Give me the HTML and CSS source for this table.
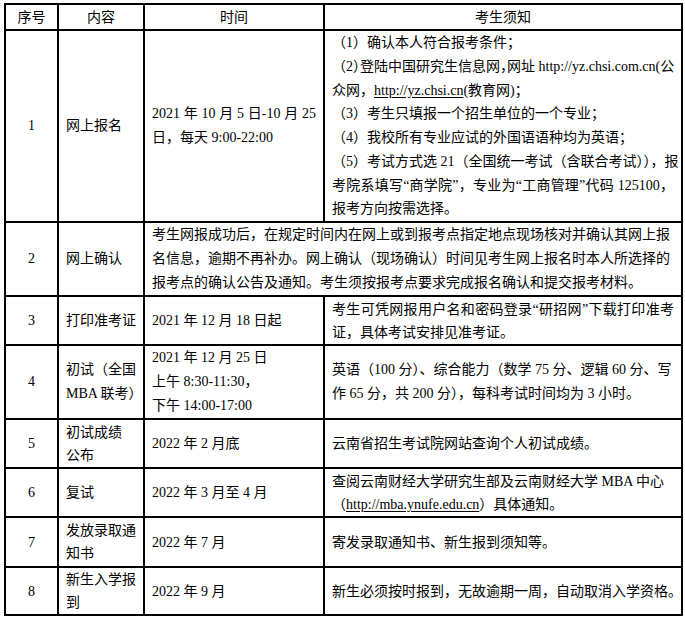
FILE: index.html
```html
<!DOCTYPE html>
<html lang="zh-CN">
<head>
<meta charset="utf-8">
<title>报考流程</title>
<link rel="stylesheet" href="styles.css">
</head>
<body>
<table class="sched">
  <colgroup>
    <col class="c-no">
    <col class="c-item">
    <col class="c-time">
    <col class="c-note">
  </colgroup>
  <thead>
    <tr class="r-head">
      <th><span class="ln">序号</span></th>
      <th><span class="ln">内容</span></th>
      <th><span class="ln">时间</span></th>
      <th><span class="ln">考生须知</span></th>
    </tr>
  </thead>
  <tbody>
    <tr class="r-1">
      <td class="no"><span class="ln">1</span></td>
      <td><span class="ln">网上报名</span></td>
      <td>
        <span class="jl">2021 年 10 月 5 日-10 月 25</span>
        <span class="ln">日，每天 9:00-22:00</span>
      </td>
      <td>
        <span class="ln">（1）确认本人符合报考条件；</span>
        <span class="jl">（2<span class="tight">）</span>登陆中国研究生信息网<span class="tight">，</span>网址 http://yz.chsi.com.cn(公</span>
        <span class="ln">众网，<a class="url">http://yz.chsi.cn</a>(教育网)；</span>
        <span class="ln">（3）考生只填报一个招生单位的一个专业；</span>
        <span class="ln">（4）我校所有专业应试的外国语语种均为英语；</span>
        <span class="jl">（5）考试方式选 21（全国统一考试（含联合考试）），报</span>
        <span class="jl">考院系填写“商学院”，专业为“工商管理”代码 125100，</span>
        <span class="ln">报考方向按需选择。</span>
      </td>
    </tr>
    <tr class="r-2">
      <td class="no"><span class="ln">2</span></td>
      <td><span class="ln">网上确认</span></td>
      <td colspan="2">
        <span class="ln">考生网报成功后，在规定时间内在网上或到报考点指定地点现场核对并确认其网上报</span>
        <span class="ln">名信息，逾期不再补办。网上确认（现场确认）时间见考生网上报名时本人所选择的</span>
        <span class="ln">报考点的确认公告及通知。考生须按报考点要求完成报名确认和提交报考材料。</span>
      </td>
    </tr>
    <tr class="r-3">
      <td class="no"><span class="ln">3</span></td>
      <td><span class="ln">打印准考证</span></td>
      <td><span class="ln">2021 年 12 月 18 日起</span></td>
      <td>
        <span class="jl">考生可凭网报用户名和密码登录“研招网”下载打印准考</span>
        <span class="ln">证，具体考试安排见准考证。</span>
      </td>
    </tr>
    <tr class="r-4">
      <td class="no"><span class="ln">4</span></td>
      <td>
        <span class="ln">初试（全国</span>
        <span class="ln">MBA 联考）</span>
      </td>
      <td>
        <span class="ln">2021 年 12 月 25 日</span>
        <span class="ln">上午 8:30-11:30，</span>
        <span class="ln">下午 14:00-17:00</span>
      </td>
      <td>
        <span class="ln">英语（100 分）、综合能力（数学 75 分、逻辑 60 分、写</span>
        <span class="ln">作 65 分，共 200 分），每科考试时间均为 3 小时。</span>
      </td>
    </tr>
    <tr class="r-5">
      <td class="no"><span class="ln">5</span></td>
      <td>
        <span class="ln">初试成绩</span>
        <span class="ln">公布</span>
      </td>
      <td><span class="ln">2022 年 2 月底</span></td>
      <td><span class="ln">云南省招生考试院网站查询个人初试成绩。</span></td>
    </tr>
    <tr class="r-6">
      <td class="no"><span class="ln">6</span></td>
      <td><span class="ln">复试</span></td>
      <td><span class="ln">2022 年 3 月至 4 月</span></td>
      <td>
        <span class="ln">查阅云南财经大学研究生部及云南财经大学 MBA 中心</span>
        <span class="ln">（<a class="url">http://mba.ynufe.edu.cn</a>）具体通知。</span>
      </td>
    </tr>
    <tr class="r-7">
      <td class="no"><span class="ln">7</span></td>
      <td>
        <span class="ln">发放录取通</span>
        <span class="ln">知书</span>
      </td>
      <td><span class="ln">2022 年 7 月</span></td>
      <td><span class="ln">寄发录取通知书、新生报到须知等。</span></td>
    </tr>
    <tr class="r-8">
      <td class="no"><span class="ln">8</span></td>
      <td>
        <span class="ln">新生入学报</span>
        <span class="ln">到</span>
      </td>
      <td><span class="ln">2022 年 9 月</span></td>
      <td><span class="ln">新生必须按时报到，无故逾期一周，自动取消入学资格。</span></td>
    </tr>
  </tbody>
</table>
</body>
</html>
```

FILE: styles.css
```css
html, body {
  margin: 0;
  padding: 0;
  background: #ffffff;
}

body {
  padding: 3px 0 0 4px;
  font-family: "Liberation Serif", "Noto Sans CJK SC", serif;
  font-size: 14px;
  line-height: 23px;
  color: #000000;
}

.sched {
  border-collapse: collapse;
  table-layout: fixed;
  width: 679px;
}

.c-no { width: 53px; }
.c-item { width: 86px; }
.c-time { width: 180px; }
.c-note { width: 358px; }

.sched th,
.sched td {
  border: 2px solid #000000;
  padding: 0 7px;
  vertical-align: middle;
  text-align: left;
  font-weight: normal;
  white-space: nowrap;
  overflow: hidden;
}

.sched th {
  text-align: center;
}

.sched td.no {
  text-align: center;
  padding: 0;
}

.ln,
.jl {
  display: block;
  height: 23px;
  line-height: 23px;
}

.jl {
  text-align: justify;
  text-align-last: justify;
}

.tight {
  font-feature-settings: "halt";
}

.url {
  color: inherit;
  text-decoration: underline;
  text-underline-offset: 2px;
}

.r-1 .ln,
.r-1 .jl {
  height: 23.75px;
  line-height: 23.75px;
}

.r-2 .ln,
.r-4 .ln {
  height: 24px;
  line-height: 24px;
}

.r-head { height: 26px; }
.r-1 { height: 192px; }
.r-2 { height: 74px; }
.r-3 { height: 49px; }
.r-4 { height: 74px; }
.r-5 { height: 49px; }
.r-6 { height: 49px; }
.r-7 { height: 50px; }
.r-8 { height: 48px; }
```
